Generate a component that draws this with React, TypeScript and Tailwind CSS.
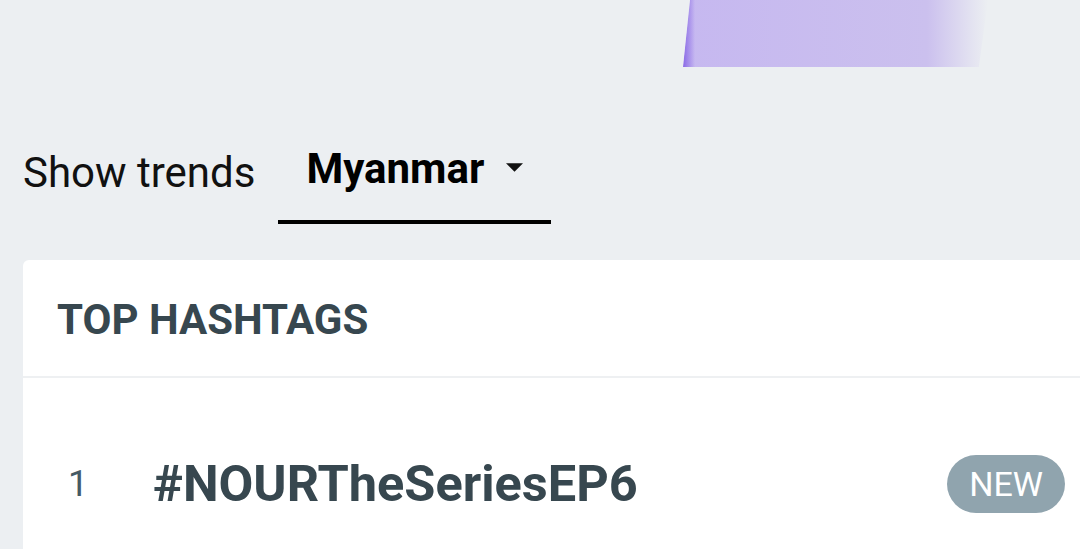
export default function App() {
  return (
    <div className="w-[1080px] h-[549px] overflow-hidden bg-[#eceff2] font-['Roboto',sans-serif]">
      {/* banner art */}
      <div className="h-[67px] relative">
        <div className="absolute left-[683px] top-0 h-[67px] w-[305px] bg-[linear-gradient(90deg,#c6b8f0_0%,#cbc0ee_80%,#eceff2_100%)] [clip-path:polygon(7px_0,100%_0,97%_100%,0_100%)]">
          <div className="absolute left-0 top-0 h-full w-[12px] bg-gradient-to-r from-[#8a6ae6] to-transparent [clip-path:polygon(7px_0,100%_0,100%_100%,0_100%)]" />
        </div>
      </div>

      <div className="flex items-end pl-[23px] pt-[81px]">
        <span className="text-[42px] leading-none text-[#111] pb-[30px]">Show trends</span>
        <button className="ml-[23px] flex items-center gap-[22px] border-b-4 border-black pl-[28px] pr-[28px] pb-[30px]">
          <span className="text-[42px] font-bold leading-none text-black">Myanmar</span>
          <svg width="17" height="9" viewBox="0 0 18 9" className="mb-[4px]">
            <path d="M0 0h18L9 9z" fill="#111" />
          </svg>
        </button>
      </div>

      <div className="ml-[23px] mt-[36px] bg-white rounded-tl-[6px]">
        <div className="h-[118px] flex items-center pl-[34px] pt-[4px] border-b-2 border-[#eef0f2]">
          <h2 className="text-[42px] font-bold text-[#37474f] leading-none">TOP HASHTAGS</h2>
        </div>
        <div className="h-[212px] flex items-center pl-[45px] pr-[15px]">
          <span className="w-[85px] text-[36px] text-[#455a64]">1</span>
          <span className="flex-1 text-[50.5px] font-bold text-[#37474f] leading-none">#NOURTheSeriesEP6</span>
          <span className="h-[58px] px-[22px] rounded-full bg-[#90a4ae] text-white text-[34px] flex items-center">NEW</span>
        </div>
      </div>
    </div>
  );
}
